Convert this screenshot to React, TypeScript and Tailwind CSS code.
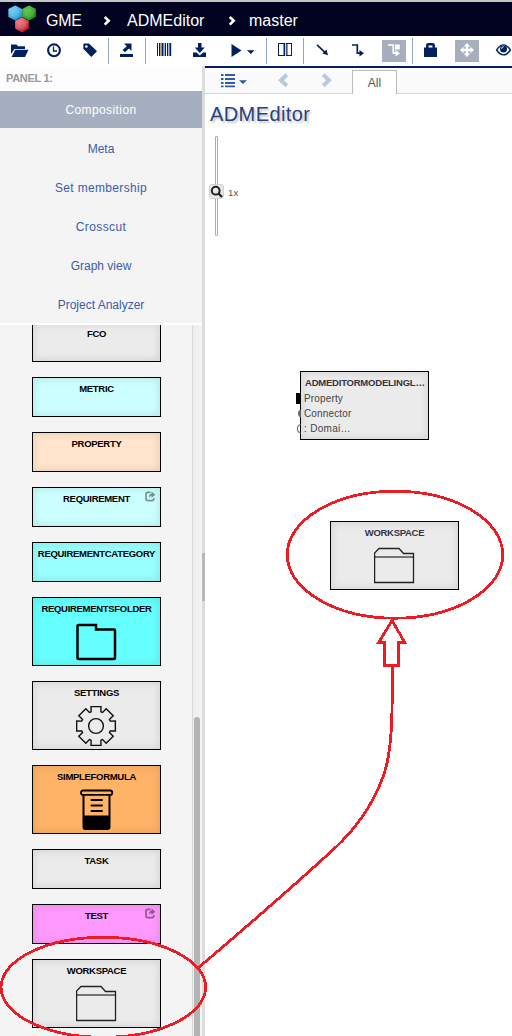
import type { ReactNode } from "react";
import clsx from "clsx";

const NAVY = "#00215c";

function Tool({ x, w = 36, children }: { x: number; w?: number; children: ReactNode }) {
  return (
    <button className="block h-[30px] shrink-0">
      <svg width={w} height={30} viewBox={`${x} 36 ${w} 30`} fill={NAVY} className="block">
        {children}
      </svg>
    </button>
  );
}

function Sep() {
  return <div className="mt-[2px] h-[26px] w-px shrink-0 bg-[#94a8cc]" />;
}

function Hex({ x, y, id }: { x: number; y: number; id: string }) {
  const p = `${x},${y - 7.6} ${x + 6.8},${y - 3.9} ${x + 6.8},${y + 3.7} ${x},${y + 7.6} ${x - 6.8},${y + 3.7} ${x - 6.8},${y - 3.9}`;
  return (
    <g>
      <polygon points={p} fill={`url(#${id})`} />
      <polygon
        points={`${x},${y - 5} ${x + 4.3},${y - 2.5} ${x + 4.3},${y + 2.3} ${x},${y + 4.8} ${x - 4.3},${y + 2.3} ${x - 4.3},${y - 2.5}`}
        fill="#fff"
        fillOpacity=".14"
      />
    </g>
  );
}

function Logo() {
  const g = [
    ["blue", "#8be0fb", "#1090d8"],
    ["green", "#6fd050", "#129010"],
    ["red", "#f59a9a", "#c40c22"],
  ];
  return (
    <svg width="30" height="34" viewBox="7 2 30 34" className="block shrink-0">
      <defs>
        {g.map(([id, a, b]) => (
          <linearGradient key={id} id={id} x1="0" y1="0" x2="0.8" y2="1">
            <stop offset="0" stopColor={a} />
            <stop offset="1" stopColor={b} />
          </linearGradient>
        ))}
      </defs>
      <Hex x={15.2} y={13} id="blue" />
      <Hex x={29} y={13} id="green" />
      <Hex x={22} y={24.8} id="red" />
    </svg>
  );
}

function Crumb() {
  return (
    <svg width="8" height="10" viewBox="0 0 8 10" className="mt-[4px] block shrink-0">
      <path d="M1.7 1 L5.7 4.8 L1.7 8.6" fill="none" stroke="#fff" strokeWidth="2.6" />
    </svg>
  );
}

function TopBar() {
  return (
    <header className="flex h-9 items-center border-t-2 border-[#c4c6c6] bg-[#020320] pl-[7px] text-[16px] leading-[34px] text-white">
      <Logo />
      <span className="w-[66px] pl-[9px] pt-[3px] tracking-[-0.3px]">GME</span>
      <Crumb />
      <span className="w-[117px] pl-4 pt-[3px]">ADMEditor</span>
      <Crumb />
      <span className="pl-[13px] pt-[3px]">master</span>
    </header>
  );
}

function Toolbar() {
  return (
    <div className="flex h-[30px] overflow-hidden bg-white">
      <Tool x={0}>
        <path d="M11 54 V44.5 h5.5 l1.5 1.8 H25 V49 H14.5 z" />
        <path d="M15.3 49.8 H28.5 L25 57 H11.5 z" />
      </Tool>
      <Tool x={36}>
        <circle cx="54" cy="50.3" r="5.9" fill="none" stroke={NAVY} strokeWidth="2.1" />
        <path d="M53.5 46.5 V51 H57" fill="none" stroke={NAVY} strokeWidth="1.3" />
      </Tool>
      <Tool x={72}>
        <path fillRule="evenodd" d="M83.5 43.5 H89 L97 51.2 L91.3 57 L83.3 48.8 z M86.4 45.2 a1.3 1.3 0 1 0 .01 0z" />
      </Tool>
      <Sep />
      <Tool x={109}>
        <path d="M120 54 H133 V57 H120 z M124 43.5 H131.5 V51 L129 48.5 L125 52.3 L122.5 50 L126.8 46.2 z" />
      </Tool>
      <Sep />
      <Tool x={146}>
        <path d="M157 43h1v13h-1z M159 43h1v13h-1z M161.5 43h2v13h-2z M165 43h1v13h-1z M167 43h1.3v13H167z M169.4 43h1.8v13h-1.8z" />
        <path d="M160.2 43h1v13h-1z" fill="#b68a55" />
        <path d="M164 43h.8v13H164z" fill="#77a7dc" />
      </Tool>
      <Tool x={182}>
        <path d="M198 43 h3.5 v4.5 h3.3 L199.8 53 L194.7 47.5 H198 z M193 52.5 h3.5 l3.3 3 3.3-3 H206 V57 H193 z" />
      </Tool>
      <Tool x={218} w={48}>
        <path d="M231.5 44 L241.5 50.5 L231.5 57 z M247 50.3 H254.5 L250.8 54 z" />
      </Tool>
      <Sep />
      <Tool x={267}>
        <path d="M278 43h14v13h-14z" />
        <path d="M279 44h4v11h-4z M287.5 44h3.5v11h-3.5z" fill="#fff" />
        <path d="M283 44h1v11h-1z M286.5 44h1v11h-1z" fill="#8796b4" />
        <path d="M285 43h.8v13h-.8z" fill="#fff" />
      </Tool>
      <Sep />
      <Tool x={304}>
        <path d="M317 44.8 L325 52.3" stroke={NAVY} strokeWidth="1.6" />
        <path d="M328 55.3 L322.4 53.5 L326.5 49.5 z" />
      </Tool>
      <Tool x={340}>
        <path d="M352 45 H357.3 V53.2 H360.5" stroke={NAVY} strokeWidth="1.7" fill="none" />
        <path d="M359.5 50 L364 53.2 L359.5 56.4 z" />
      </Tool>
      <Tool x={376}>
        <path d="M382 40h24v22h-24z" fill="#a7afbf" />
        <path d="M388 45 H393.3 V53.2 H396.5" stroke="#fff" strokeWidth="1.7" fill="none" />
        <path d="M395.5 50 L400 53.2 L395.5 56.4 z M395 44.5h4.8v5H395z" fill="#fff" />
      </Tool>
      <Sep />
      <Tool x={413}>
        <path d="M424 47.5 H437 V57 H424 z" />
        <path d="M427.3 48 V45.5 Q427.3 44.3 428.7 44.3 H432.3 Q433.7 44.3 433.7 45.5 V48" fill="none" stroke={NAVY} strokeWidth="2.5" />
      </Tool>
      <Tool x={449}>
        <path d="M455 40h24v22h-24z" fill="#a7afbf" />
        <path
          d="M467 43 l3.3 3.6 h-2.1 v2.2 h2.3 v-2 l3.5 3.2 -3.5 3.2 v-2 h-2.3 v2.2 h2.1 L467 57 l-3.3-3.6 h2.1 v-2.2 h-2.3 v2 L460 50 l3.5-3.2 v2 h2.3 v-2.2 h-2.1 z"
          fill="#fff"
        />
      </Tool>
      <Tool x={485}>
        <path d="M496.6 50 Q503.5 39.7 510.4 50 Q503.5 59.8 496.6 50 z" fill="#fff" stroke={NAVY} strokeWidth="1.4" />
        <circle cx="503.5" cy="49" r="3.5" />
        <path d="M501.6 48.8 q0-2 2-2" stroke="#fff" fill="none" />
      </Tool>
    </div>
  );
}

const menu = [
  { label: "Composition", cls: "bg-[#a6afbf] text-white tracking-[0.4px]" },
  { label: "Meta", cls: "text-[#3a5da8]" },
  { label: "Set membership", cls: "text-[#3a5da8] tracking-[0.33px]" },
  { label: "Crosscut", cls: "text-[#3a5da8] tracking-[0.4px]" },
  { label: "Graph view", cls: "text-[#3a5da8]" },
  { label: "Project Analyzer", cls: "text-[#3a5da8]" },
];

function FolderThick() {
  return (
    <svg width="42" height="38" viewBox="0.5 0 42 38" className="mx-auto block">
      <path d="M2 3 Q2 2 3 2 H20.5 V6.5 H38.5 Q39.5 6.5 39.5 7.5 V35 Q39.5 36 38.5 36 H3 Q2 36 2 35 z" fill="none" stroke="#000" strokeWidth="2.5" />
    </svg>
  );
}

function FolderThin() {
  return (
    <svg width="41" height="37" viewBox="0 0 41 37" className="mx-auto block">
      <path d="M.6 35.5 V6 L5 1.5 H25 L29.5 6.5 H39.5 V35.5 z" fill="none" stroke="#222" strokeWidth="1.3" />
      <path d="M.6 10 H39.5" stroke="#000" strokeWidth="1.2" />
    </svg>
  );
}

function Gear() {
  const pts: string[] = [];
  for (let i = 0; i < 8; i++) {
    const a = (i * 45 * Math.PI) / 180;
    const add = (r: number, d: number) => {
      const t = a + (d * Math.PI) / 180;
      pts.push(`${(20.5 + r * Math.sin(t)).toFixed(2)},${(20.5 - r * Math.cos(t)).toFixed(2)}`);
    };
    add(15, -19);
    add(20, -14.5);
    add(20, 14.5);
    add(15, 19);
  }
  return (
    <svg width="41" height="41" viewBox="0.5 -0.5 41 41" className="mx-auto block">
      <polygon points={pts.join(" ")} fill="none" stroke="#111" strokeWidth="1.4" />
      <circle cx="20.5" cy="20.5" r="7.4" fill="none" stroke="#111" strokeWidth="1.4" />
    </svg>
  );
}

function Beaker() {
  return (
    <svg width="34" height="41" viewBox="0.5 -0.5 34 41" className="mx-auto block">
      <rect x="1.4" y="1" width="31.4" height="4.4" rx="2.2" fill="none" stroke="#000" strokeWidth="1.8" />
      <path d="M4 6 V37.5 Q4 39.5 6 39.5 H28 Q30 39.5 30 37.5 V6" fill="none" stroke="#000" strokeWidth="2" />
      <path d="M4 26 H30 V38 Q30 40 28 40 H6 Q4 40 4 38 z" />
      <path d="M12 10.5 H22.5 M12 16 H22.5 M12 21.5 H22.5" stroke="#000" strokeWidth="1.9" strokeLinecap="round" />
    </svg>
  );
}

function LinkMark() {
  return (
    <svg width="11" height="11" viewBox="0 0 11 11" className="absolute right-[4px] top-[3px]" opacity=".42">
      <path d="M5.5 1.3 H2.9 Q1 1.3 1 3.3 V7.7 Q1 9.6 2.9 9.6 H7 Q8.8 9.6 8.8 7.7 V7" fill="none" stroke="#000" strokeWidth="1.7" />
      <path d="M3.8 6.5 Q4 3 6.5 2.7 V.6 L10.4 3.8 L6.5 7 V4.9 Q5 4.9 3.8 6.5z" />
    </svg>
  );
}

interface Part {
  label: string;
  bg: string;
  link?: boolean;
  pad?: string;
  icon?: ReactNode;
}

const parts: Part[] = [
  { label: "FCO", bg: "bg-[#ebebeb]" },
  { label: "METRIC", bg: "bg-[#ccffff]" },
  { label: "PROPERTY", bg: "bg-[#ffe5cc]" },
  { label: "REQUIREMENT", bg: "bg-[#ccffff]", link: true },
  { label: "REQUIREMENTCATEGORY", bg: "bg-[#99ffff]" },
  { label: "REQUIREMENTSFOLDER", bg: "bg-[#66ffff]", icon: <FolderThick />, pad: "pt-[8px]" },
  { label: "SETTINGS", bg: "bg-[#ebebeb]", icon: <Gear />, pad: "pt-[6px]" },
  { label: "SIMPLEFORMULA", bg: "bg-[#ffb366]", icon: <Beaker />, pad: "pt-[6px]" },
  { label: "TASK", bg: "bg-[#ebebeb]" },
  { label: "TEST", bg: "bg-[#ff99ff]", link: true },
  { label: "WORKSPACE", bg: "bg-[#ebebeb]", icon: <FolderThin />, pad: "pt-[8px]" },
];

function Card({ label, bg, link, icon, pad, dim }: Part & { dim?: boolean }) {
  return (
    <div
      className={clsx(
        "relative w-[129px] shrink-0 border border-black text-center text-[9.5px] font-bold leading-[12px] tracking-[-0.3px] shadow-[inset_0_0_10px_rgba(0,0,0,0.12)]",
        icon ? "h-[69px]" : "h-10",
        dim ? "text-[#333344]" : "text-black",
        bg,
      )}
    >
      <div className="pt-[5px]">{label}</div>
      {link && <LinkMark />}
      {icon && <div className={pad}>{icon}</div>}
    </div>
  );
}

function SidePanel() {
  return (
    <aside className="flex w-[202px] shrink-0 flex-col bg-white">
      <div className="h-[25px] bg-[#fdfdfd] pl-[6px] text-[11px] font-bold leading-[24px] tracking-[-0.3px] text-[#999]">PANEL 1:</div>
      <nav className="flex flex-col bg-[#f4f4f4]">
        {menu.map((m, i) => (
          <a key={m.label} className={clsx("block h-[37px] text-center text-[12px] leading-[38px]", i > 0 && "mt-[2px]", m.cls)}>
            {m.label}
          </a>
        ))}
      </nav>
      <div className="mt-[2px] flex min-h-0 flex-1 overflow-hidden bg-[#f4f4f4]">
        <div className="-mt-[3px] flex w-[192px] flex-col gap-[15px] pl-8">
          {parts.map((p) => (
            <Card key={p.label} {...p} />
          ))}
        </div>
        <div className="w-[10px] border-l border-[#d8d8d8] bg-gradient-to-r from-[#ececec] to-[#f4f4f4] pl-px pt-[392px]">
          <div className="h-[400px] w-[6px] rounded-[3px] bg-[#b4b4b4]" />
        </div>
      </div>
    </aside>
  );
}

function ViewTabs() {
  return (
    <div className="flex h-[26px] border-b border-[#d8d8d8] bg-[#fafafa]">
      <svg width="147" height="25" viewBox="205 68 147 25" className="block shrink-0">
        <path
          d="M221 74h2.5v2H221z M225 74h10v2h-10z M221 78h2.5v2H221z M225 78h10v2h-10z M221 82h2.5v2H221z M225 82h10v2h-10z M221 85.5h2.5v1.7H221z M225 85.5h10v1.7h-10z M239 80.3h8l-4 3.8z"
          fill="#2d5cad"
        />
        <path d="M286.8 74.8 L281 80.3 L286.8 85.8 M323.2 74.8 L329 80.3 L323.2 85.8" fill="none" stroke="#bac9e1" strokeWidth="4" />
      </svg>
      <div className="mt-[2px] h-[24px] w-[45px] border border-b-0 border-[#bbb] bg-white text-center text-[12px] leading-[24px] text-[#555]">All</div>
    </div>
  );
}

function Canvas() {
  return (
    <div className="relative min-h-0 flex-1 overflow-hidden">
      <h1 className="pl-[5px] pt-[7px] text-[20px] leading-[26px] tracking-[0.4px] text-[#25427a] [text-shadow:2px_2px_2px_#c8c8c8]">ADMEditor</h1>
      <div className="ml-[4px] mt-[9px] flex h-[100px] items-center">
        <div className="relative flex h-full w-[15px] justify-center">
          <div className="h-full w-[3px] rounded-[1px] border border-[#aaa] bg-white" />
          <div className="absolute left-0 top-[48px] flex h-[15px] w-[15px] items-center justify-center rounded-[3px] border border-[#d0d0d0] bg-[#e8e8e8]">
            <svg width="13" height="13" viewBox="0 0 13 13" className="block shrink-0">
              <circle cx="5.7" cy="5.7" r="3.9" fill="none" stroke="#222" strokeWidth="2" />
              <path d="M8.5 8.5 L12 12" stroke="#222" strokeWidth="2.4" />
            </svg>
          </div>
        </div>
        <span className="pl-[4px] pt-[13px] text-[9.5px] leading-[12px] tracking-[0.3px] text-[#555]">1x</span>
      </div>

      <div className="absolute left-[95px] top-[277px] h-[69px] w-[129px] border border-black bg-[#ebebeb] pl-[3px] pt-[5px] text-[10px] leading-[15px] text-[#444] shadow-[inset_0_0_10px_rgba(0,0,0,0.12)]">
        <div className="whitespace-nowrap pl-px text-[9.5px] font-bold leading-[12px] tracking-[-0.22px] text-[#333344]">ADMEDITORMODELINGL…</div>
        <div className="pt-[2px] tracking-[0.15px]">Property</div>
        <div className="tracking-[0.15px]">Connector</div>
        <div className="tracking-[0.3px]">: Domai…</div>
        <svg width="5" height="45" viewBox="0 0 5 45" className="absolute -left-[5px] top-[20px]">
          <path d="M0 1h5v11H0z" />
          <path d="M5 17.5 Q2 18 2 21.5 Q2 25 5 25.5z" fill="#666" />
          <path d="M4.8 32.5 Q1.4 33 1.4 36.8 Q1.4 40.5 4.8 41" fill="none" stroke="#777" strokeWidth="1.2" />
        </svg>
      </div>

      <div className="absolute left-[125px] top-[427px]">
        <Card label="WORKSPACE" bg="bg-[#ebebeb]" icon={<FolderThin />} pad="pt-[8px]" dim />
      </div>
    </div>
  );
}

function Annotations() {
  return (
    <svg
      width="512"
      height="1036"
      viewBox="0 0 512 1036"
      className="pointer-events-none absolute left-0 top-0"
      fill="none"
      stroke="#ed1c24"
      strokeWidth="2.8"
      shapeRendering="crispEdges"
    >
      <ellipse cx="103.3" cy="987.3" rx="102.3" ry="50" />
      <ellipse cx="395" cy="554.7" rx="107.8" ry="63.5" />
      <path d="M392 620.5 L378.7 642.5 H384.6 V665.5 H398.4 V642.5 H404.8 z" />
      <path d="M392.4 666 C392.4 715 392.5 755 381.8 780 C371 808 352 832 335 848 C300 880 250 924 198 968" />
    </svg>
  );
}

export default function App() {
  return (
    <div className="relative flex h-[1036px] w-[512px] flex-col overflow-hidden bg-white font-['Liberation_Sans',Arial,sans-serif]">
      <TopBar />
      <Toolbar />
      <div className="flex min-h-0 flex-1">
        <SidePanel />
        <div className="w-[3px] shrink-0 bg-[#dcdcdc] pt-[487px]">
          <div className="h-12 bg-[#b8b8b8]" />
        </div>
        <main className="flex min-w-0 flex-1 flex-col border-t-2 border-[#00215c] bg-white">
          <ViewTabs />
          <Canvas />
        </main>
      </div>
      <Annotations />
    </div>
  );
}
